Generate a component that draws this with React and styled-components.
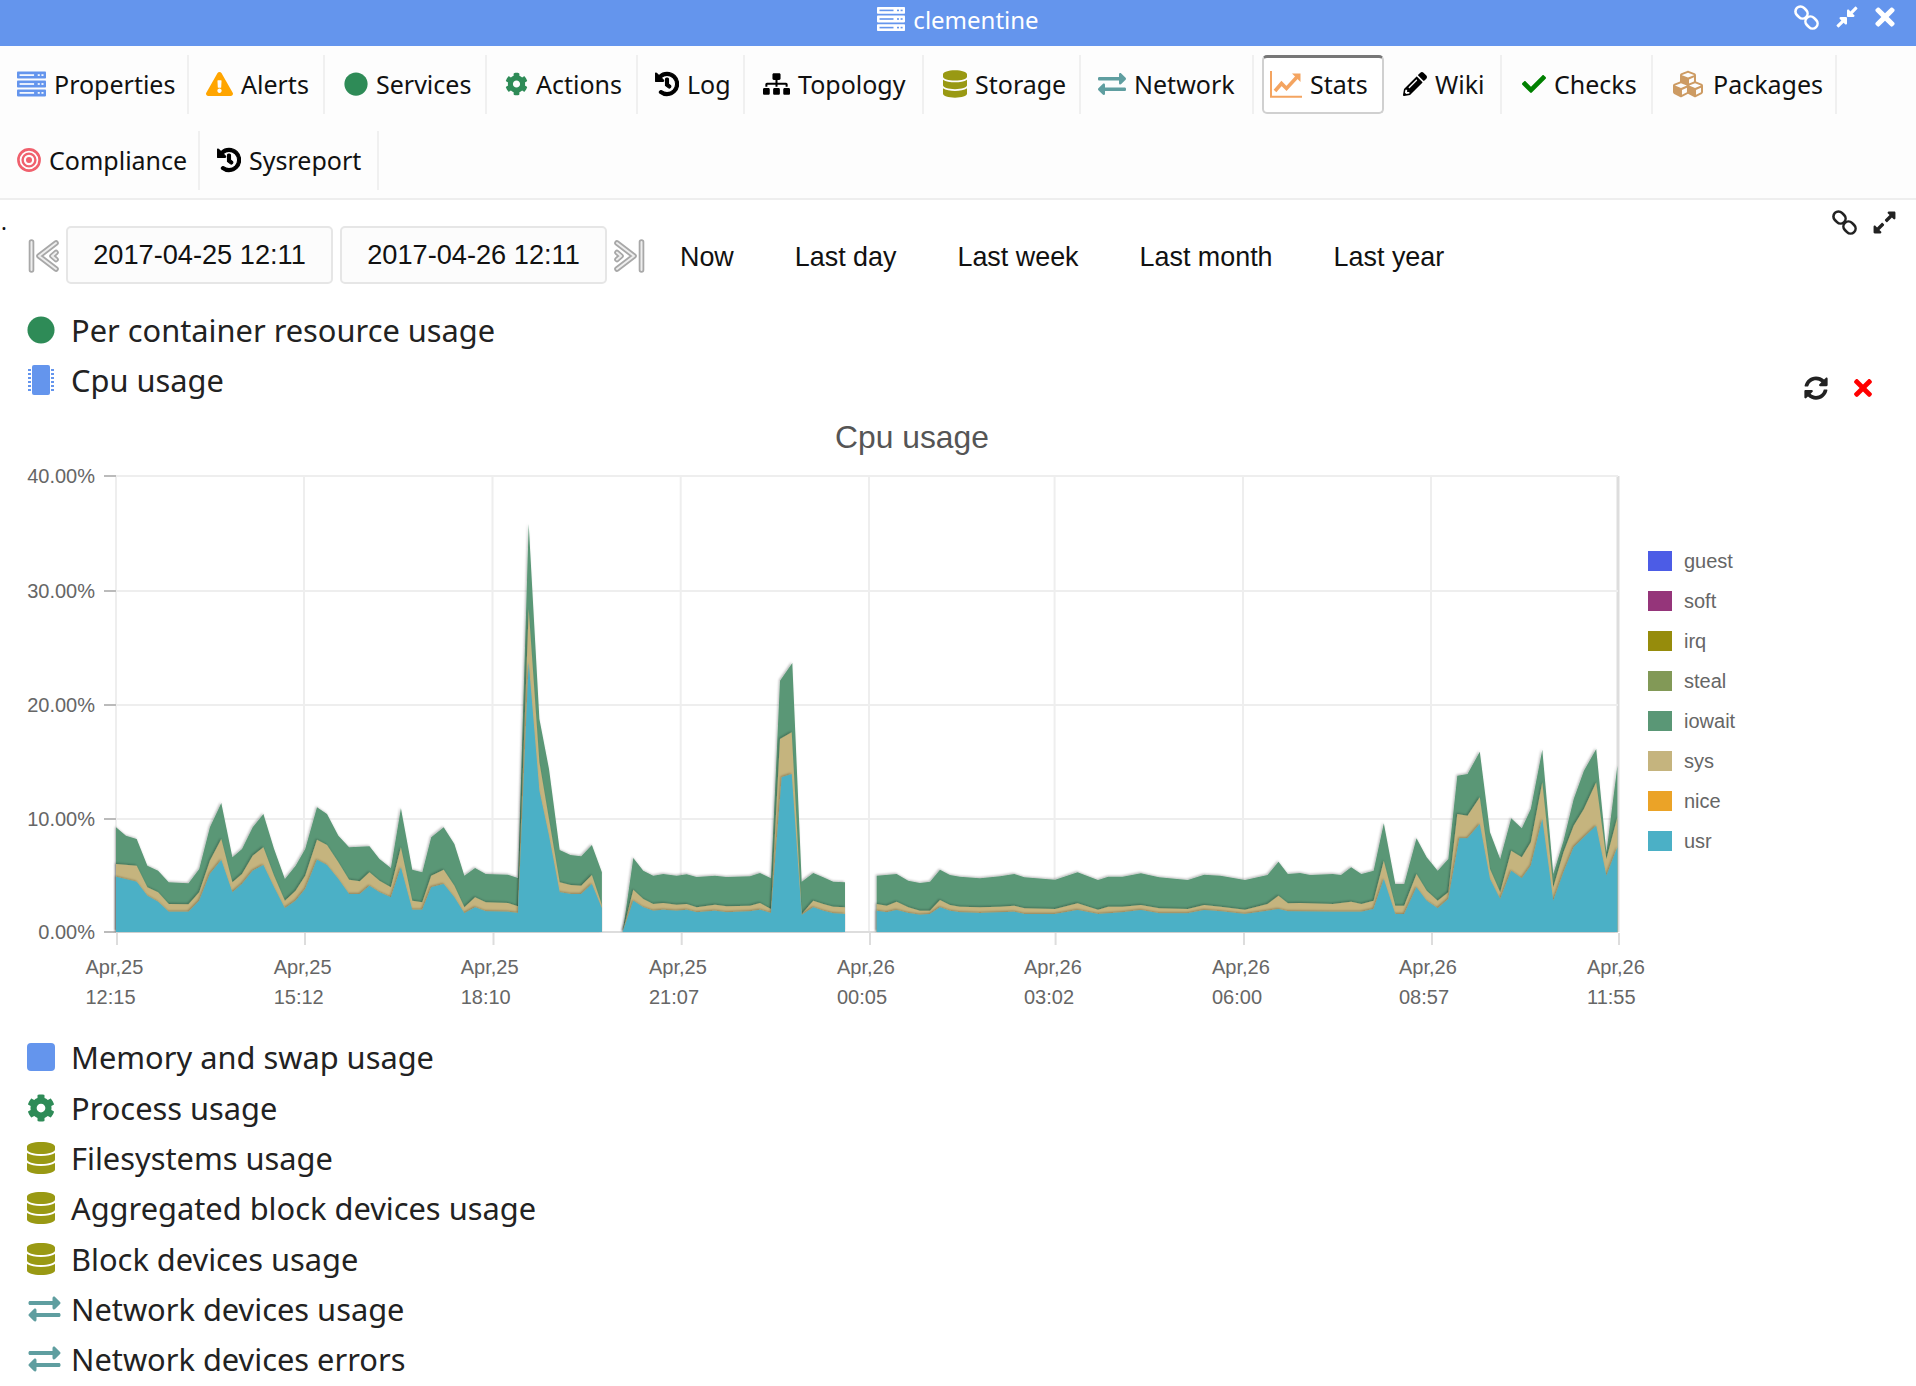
import React from "react";
import styled, { createGlobalStyle } from "styled-components";
import {
  FaCircle,
  FaCog,
  FaCheck,
  FaCompressAlt,
  FaCubes,
  FaDatabase,
  FaExchangeAlt,
  FaExclamationTriangle,
  FaExpandAlt,
  FaHistory,
  FaPencilAlt,
  FaSitemap,
  FaSyncAlt,
  FaTimes,
} from "react-icons/fa";

const GlobalStyle = createGlobalStyle`
  html, body {
    margin: 0;
    padding: 0;
    background: #fff;
    overflow: hidden;
  }
  body {
    font-family: "Noto Sans", sans-serif;
  }
`;

const TitleBar = styled.div`
  position: relative;
  height: 46px;
  padding-bottom: 8px;
  box-sizing: border-box;
  background: #6495ed;
  color: #fff;
  font-size: 24px;
  display: flex;
  justify-content: center;
  align-items: center;
  gap: 8px;
`;
const TitleActions = styled.div`
  position: absolute;
  top: 3px;
  right: 17px;
  display: flex;
  align-items: center;
  gap: 16px;
  svg:last-child {
    margin-left: -4px;
  }
`;
const TabBar = styled.div`
  display: flex;
  flex-wrap: wrap;
  row-gap: 17px;
  padding: 9px 0 8px;
  background: #fdfdfd;
  border-bottom: 2px solid #eee;
`;
const Tab = styled.div`
  width: ${(p) => p.$width}px;
  height: 59px;
  box-sizing: border-box;
  padding: 0 0 2px ${(p) => p.$pad || 17}px;
  display: flex;
  align-items: center;
  gap: 8px;
  color: #111;
  font-size: 25px;
  white-space: nowrap;
  border-right: 2px solid #f0f0f0;
  ${(p) =>
    p.$active &&
    `
    margin-left: 8px;
    padding-left: 6px;
    background: #fff;
    border: 2px solid #d0d0d0;
    border-top: 3px solid #777;
    border-radius: 5px;
  `}
`;
const IconBox = styled.span`
  flex: none;
  display: inline-flex;
  align-items: center;
  justify-content: center;
  width: ${(p) => p.$w}px;
  color: ${(p) => p.$color};
  svg {
    width: ${(p) => p.$w}px;
    height: ${(p) => p.$h || 30}px;
    display: block;
  }
`;
const Controls = styled.div`
  display: flex;
  height: 104.5px;
  box-sizing: border-box;
  padding: 26px 19px 0 0;
  font-family: "Liberation Sans", sans-serif;
  font-size: 27.2px;
  color: #111;
`;
const Dot = styled.span`
  width: 28px;
  font-family: "Noto Sans", sans-serif;
  font-size: 22px;
  line-height: 22px;
  padding-left: 1px;
  box-sizing: border-box;
  margin-top: -16px;
`;
const DateBox = styled.div`
  width: 267px;
  height: 58px;
  box-sizing: border-box;
  margin-right: 7px;
  display: flex;
  align-items: center;
  justify-content: center;
  background: #fcfcfc;
  border: 2px solid #e6e6e6;
  border-radius: 5px;
`;
const StepButton = styled.span`
  flex: none;
  width: 31px;
  height: 58px;
  margin-right: ${(p) => p.$mr}px;
  display: flex;
  align-items: center;
`;
const RangeLink = styled.span`
  height: 58px;
  box-sizing: border-box;
  padding: 4px 30.5px 0;
  display: flex;
  align-items: center;
  font-size: 26.9px;
`;
const CornerActions = styled.div`
  margin-left: auto;
  margin-top: -16px;
  height: 26px;
  display: flex;
  gap: 15px;
  color: #222;
`;
const Row = styled.div`
  height: 50.33px;
  padding: 0 40px 0 27px;
  display: flex;
  align-items: center;
  font-size: 30.8px;
  color: #222;
`;
const RowIcon = styled.span`
  flex: none;
  width: 44px;
  display: flex;
  align-items: center;
  color: ${(p) => p.$color};
  svg {
    width: ${(p) => p.$w || 28}px;
    height: ${(p) => p.$h || 32}px;
    display: block;
  }
`;
const RowActions = styled.div`
  margin-left: auto;
  margin-top: 16px;
  display: flex;
  align-items: center;
  gap: 22px;
  color: #222;
  svg {
    display: block;
  }
`;
const Chart = styled.svg`
  display: block;
  width: 1916px;
  height: 627px;
  font-family: "Liberation Sans", sans-serif;
`;

const ServerIcon = ({ cut }) => (
  <svg viewBox="0 0 28 24">
    {[0, 8.6, 17.2].map((y) => (
      <g key={y}>
        <rect y={y} width="28" height="6.8" rx="0.8" fill="currentColor" />
        <rect x="2.5" y={y + 2.6} width="14" height="1.6" fill={cut} />
        <rect x="20" y={y + 2.6} width="2" height="1.6" fill={cut} />
        <rect x="23.6" y={y + 2.6} width="2" height="1.6" fill={cut} />
      </g>
    ))}
  </svg>
);

const ChainIcon = ({ size = 25 }) => (
  <svg width={size} height={size} viewBox="0 0 25 25" fill="none" stroke="currentColor" strokeWidth="2.6">
    <rect x="1" y="2.5" width="13" height="10" rx="5" transform="rotate(45 7.5 7.5)" />
    <rect x="11" y="12.5" width="13" height="10" rx="5" transform="rotate(45 17.5 17.5)" />
  </svg>
);

const BullseyeIcon = () => (
  <svg viewBox="0 0 24 24">
    <circle cx="12" cy="12" r="10.6" fill="none" stroke="currentColor" strokeWidth="2.6" />
    <circle cx="12" cy="12" r="6.4" fill="none" stroke="currentColor" strokeWidth="2.4" />
    <circle cx="12" cy="12" r="3" fill="currentColor" />
  </svg>
);

const LineChartIcon = () => (
  <svg viewBox="0 0 32 28" fill="none" stroke="currentColor">
    <path d="M1 1V26.8H32" strokeWidth="2" />
    <path d="M5 21L11.5 13.5L16.5 18.5L27 7" strokeWidth="3.6" />
    <path d="M22 3.5H30.5V12Z" fill="currentColor" stroke="none" />
  </svg>
);

const CpuIcon = () => (
  <svg viewBox="0 0 28 32">
    <rect x="5" y="1" width="18" height="30" rx="2" fill="currentColor" />
    {[5, 9, 13, 17, 21, 25].map((y) => (
      <g key={y}>
        <rect x="1" y={y} width="3" height="2" fill="currentColor" />
        <rect x="24" y={y} width="3" height="2" fill="currentColor" />
      </g>
    ))}
  </svg>
);

const MemoryIcon = () => (
  <svg viewBox="0 0 28 32">
    <rect y="2" width="28" height="28" rx="4" fill="currentColor" />
  </svg>
);

const StepIcon = ({ flip }) => (
  <svg width="31" height="36" viewBox="0 0 31 36" style={flip ? { transform: "scaleX(-1)" } : undefined}>
    {["#a8a8a8", "#eee"].map((stroke, i) => (
      <g key={stroke} fill="none" stroke={stroke} strokeWidth={i ? 2 : 5.6} strokeLinecap="round" strokeLinejoin="round">
        <path d="M3.5 5V33" />
        <path d="M28 6L11 19L28 32" />
        <path d="M28 15.5L24 19L28 22.5" />
      </g>
    ))}
  </svg>
);

const tabRows = [
  { label: "Properties", icon: <ServerIcon cut="#fff" />, color: "#6495ed", w: 29, width: 189 },
  { label: "Alerts", icon: <FaExclamationTriangle />, color: "#ffa500", w: 27, width: 136 },
  { label: "Services", icon: <FaCircle />, color: "#2e8b57", w: 24, width: 162, pad: 19 },
  { label: "Actions", icon: <FaCog />, color: "#2e8b57", w: 23, width: 151, pad: 18 },
  { label: "Log", icon: <FaHistory strokeWidth={24} />, color: "#000", w: 24, width: 107 },
  { label: "Topology", icon: <FaSitemap />, color: "#000", w: 27, width: 179, pad: 18 },
  { label: "Storage", icon: <FaDatabase />, color: "#999913", w: 24, width: 157, pad: 19 },
  { label: "Network", icon: <FaExchangeAlt />, color: "#5f9ea0", w: 28, width: 173 },
  { label: "Stats", icon: <LineChartIcon />, color: "#f4a460", w: 32, width: 122, active: true },
  { label: "Wiki", icon: <FaPencilAlt />, color: "#000", w: 24, width: 118, pad: 19 },
  { label: "Checks", icon: <FaCheck />, color: "#008000", w: 24, width: 151, pad: 20 },
  { label: "Packages", icon: <FaCubes />, color: "#cd9b63", w: 34, width: 184, pad: 18 },
  { label: "Compliance", icon: <BullseyeIcon />, color: "#f0606d", w: 24, width: 200 },
  { label: "Sysreport", icon: <FaHistory strokeWidth={24} />, color: "#000", w: 24, width: 179 },
];

const ranges = ["Now", "Last day", "Last week", "Last month", "Last year"];

const afterChart = [
  { label: "Memory and swap usage", icon: <MemoryIcon />, color: "#6495ed" },
  { label: "Process usage", icon: <FaCog />, color: "#2e8b57" },
  { label: "Filesystems usage", icon: <FaDatabase />, color: "#999913" },
  { label: "Aggregated block devices usage", icon: <FaDatabase />, color: "#999913" },
  { label: "Block devices usage", icon: <FaDatabase />, color: "#999913" },
  { label: "Network devices usage", icon: <FaExchangeAlt />, color: "#5f9ea0", w: 35 },
  { label: "Network devices errors", icon: <FaExchangeAlt />, color: "#5f9ea0", w: 35 },
];

// chart traces, read off the reference as flat x,y lists, one scale per stretch of the graph
const scaleA = (x, y) => [101 + x * 0.357, 500 + y / 3];
const scaleB = (x, y) => [600 + x / 3, 640 + y / 3];
const scaleC = (x, y) => [1000 + x / 2.449, 720 + y / 3];

const traceA = {
  iowait: [42,985,70,1010,100,1020,130,1100,160,1115,190,1150,245,1153,275,1110,305,985,337,912,368,1075,395,1050,425,985,455,945,485,1050,515,1140,545,1100,572,1050,605,925,633,945,665,1010,695,1045,752,1042,780,1080,812,1107,840,928,872,1112,900,1120,925,1015,960,985,990,1035,1018,1130,1048,1107,1078,1125,1140,1127,1168,1137,1198,75,1228,660,1255,810,1285,1053,1315,1068,1345,1072,1375,1038,1403,1120],
  sys: [42,1095,100,1100,130,1165,160,1180,190,1215,245,1216,275,1180,305,1085,337,1020,368,1150,395,1125,425,1070,455,1045,485,1130,515,1205,545,1175,572,1130,605,1022,633,1038,665,1090,695,1142,725,1147,752,1120,780,1145,812,1165,840,1045,872,1205,900,1210,925,1130,960,1112,990,1160,1018,1225,1048,1195,1078,1210,1140,1212,1168,1222,1198,330,1228,790,1255,960,1285,1150,1315,1158,1345,1160,1375,1128,1403,1218],
  usr: [42,1133,100,1148,130,1190,160,1208,190,1238,245,1238,275,1205,305,1125,337,1083,368,1180,395,1155,425,1115,455,1098,485,1165,515,1228,545,1205,572,1170,605,1082,633,1098,665,1140,695,1185,725,1185,752,1160,780,1180,812,1195,840,1105,872,1232,900,1232,925,1165,960,1155,990,1195,1018,1243,1048,1225,1078,1237,1140,1238,1168,1242,1198,490,1228,875,1255,1010,1285,1180,1315,1185,1345,1185,1375,1155,1403,1228],
};
const traceB = {
  iowait: [100,657,130,695,160,710,190,705,230,710,260,706,290,714,345,710,380,714,450,712,480,702,513,718,540,125,577,72,605,728,640,702,670,715,700,728,735,730],
  sys: [100,752,130,780,160,795,190,792,230,797,260,795,290,805,345,797,380,802,450,800,480,792,513,810,540,300,575,280,605,825,640,785,670,795,700,803,735,805],
  usr: [100,785,130,805,160,815,190,812,230,815,260,812,290,820,345,815,380,820,450,817,480,812,513,822,545,415,575,405,605,828,640,805,670,815,700,823,735,825],
};
const traceB2 = {
  iowait: [830,710,890,705,925,725,960,732,990,728,1020,692,1050,708,1080,713,1140,718,1200,712],
  sys: [830,795,860,800,890,788,925,805,960,815,990,815,1020,783,1050,798,1080,803,1140,805,1200,803],
  usr: [830,815,860,820,890,813,925,822,960,827,990,825,1020,805,1050,815,1080,820,1140,822,1200,820],
};
const traceC = {
  iowait: [35,465,60,475,135,482,190,460,240,483,265,473,300,473,345,463,390,475,460,483,500,467,540,470,600,483,655,468,682,428,705,465,735,462,760,468,815,465,835,468,860,445,885,465,915,455,940,313,968,495,990,495,1020,358,1045,415,1072,455,1098,420,1120,170,1145,165,1175,98,1200,340,1225,420,1252,298,1278,328,1300,270,1328,92,1355,465,1380,365,1405,240,1430,155,1460,90,1485,400,1512,140],
  sys: [35,560,60,568,135,570,190,553,240,572,265,563,300,563,345,558,390,568,460,570,500,558,540,563,600,572,655,555,682,530,705,553,735,552,815,555,860,548,885,555,915,545,940,425,968,560,990,560,1020,465,1045,515,1072,545,1098,520,1120,285,1145,290,1175,235,1200,450,1225,520,1252,395,1278,415,1300,370,1328,190,1355,505,1380,400,1405,320,1430,270,1460,190,1485,420,1512,295],
  usr: [35,578,60,585,135,585,190,573,240,585,300,580,345,573,390,583,460,583,500,573,540,577,600,585,655,575,682,570,705,577,815,578,885,578,915,570,940,480,968,585,990,585,1020,505,1045,545,1072,568,1098,540,1125,358,1145,358,1175,315,1200,480,1225,540,1252,455,1278,478,1300,440,1328,300,1355,545,1380,460,1405,385,1430,355,1460,320,1485,470,1512,385],
};

const BASE = 933;

const toPoints = (flat, scale) => {
  const pts = [];
  for (let i = 0; i < flat.length; i += 2) pts.push(scale(flat[i], flat[i + 1]));
  return pts;
};

const layerPath = (key) => {
  const stretches = [
    toPoints(traceA[key], scaleA),
    [[622.7, BASE], ...toPoints(traceB[key], scaleB)],
    [...toPoints(traceB2[key], scaleB), ...toPoints(traceC[key], scaleC)],
  ];
  return stretches
    .map((pts) => {
      const line = pts.map(([x, y]) => `${x.toFixed(1)} ${y.toFixed(1)}`).join("L");
      return `M${pts[0][0].toFixed(1)} ${BASE}L${line}L${pts[pts.length - 1][0].toFixed(1)} ${BASE}Z`;
    })
    .join("");
};

const layers = [
  { key: "iowait", color: "#5a9776" },
  { key: "sys", color: "#c5b47e" },
  { key: "usr", color: "#4bb0c6" },
];

const legend = [
  ["guest", "#4c5ce6"],
  ["soft", "#95357a"],
  ["irq", "#968c0c"],
  ["steal", "#829957"],
  ["iowait", "#5a9776"],
  ["sys", "#c5b47e"],
  ["nice", "#eba327"],
  ["usr", "#4bb0c6"],
];

const gridX = [116, 304, 492.5, 680.7, 869, 1054.6, 1243, 1431, 1618];
const gridY = [
  ["40.00%", 477],
  ["30.00%", 592],
  ["20.00%", 706],
  ["10.00%", 820],
  ["0.00%", 933],
];
const xLabels = [
  ["Apr,25", "12:15", 85.5],
  ["Apr,25", "15:12", 273.7],
  ["Apr,25", "18:10", 460.7],
  ["Apr,25", "21:07", 649],
  ["Apr,26", "00:05", 837],
  ["Apr,26", "03:02", 1024],
  ["Apr,26", "06:00", 1212],
  ["Apr,26", "08:57", 1399],
  ["Apr,26", "11:55", 1587],
];

const CpuChart = () => (
  <Chart viewBox="0 406 1916 627">
    <defs>
      <filter id="areaShadow" x="-5%" y="-5%" width="110%" height="110%">
        <feGaussianBlur in="SourceGraphic" stdDeviation="0.4" result="soft" />
        <feDropShadow in="soft" dx="-1" dy="-1" stdDeviation="1" floodColor="#000" floodOpacity="0.28" />
      </filter>
    </defs>
    <text x="912" y="449" textAnchor="middle" fontSize="31.8" fill="#555">
      Cpu usage
    </text>
    {gridX.map((x) => (
      <g key={x}>
        <line x1={x} x2={x} y1="477" y2="933" stroke={x === 1618 ? "#ddd" : "#eee"} strokeWidth={x === 1618 ? 3 : 2} />
        <line x1={x + 1} x2={x + 1} y1="934" y2="946" stroke="#ddd" strokeWidth="2" />
      </g>
    ))}
    {gridY.map(([label, y]) => (
      <g key={label}>
        <line x1="116" x2="1618" y1={y} y2={y} stroke={y === 933 ? "#ddd" : "#eee"} strokeWidth="2" />
        <line x1="104" x2="116" y1={y} y2={y} stroke="#bbb" strokeWidth="2" />
        <text x="95" y={y + 7} textAnchor="end" fontSize="20" fill="#666">
          {label}
        </text>
      </g>
    ))}
    {xLabels.map(([day, time, x]) => (
      <text key={time} fontSize="20" fill="#666">
        <tspan x={x} y="975">
          {day}
        </tspan>
        <tspan x={x} y="1005">
          {time}
        </tspan>
      </text>
    ))}
    {layers.map(({ key, color }) => (
      <path key={key} d={layerPath(key)} fill={color} filter="url(#areaShadow)" />
    ))}
    {legend.map(([name, color], i) => (
      <g key={name}>
        <rect x="1648" y={552 + i * 40} width="24" height="20" fill={color} />
        <text x="1684" y={569 + i * 40} fontSize="20" fill="#666">
          {name}
        </text>
      </g>
    ))}
  </Chart>
);

const App = () => (
  <>
    <GlobalStyle />
    <TitleBar>
      <IconBox $w={28} $h={24} $color="#fff">
        <ServerIcon cut="#6495ed" />
      </IconBox>
      clementine
      <TitleActions>
        <ChainIcon />
        <FaCompressAlt size={24} />
        <FaTimes size={28} />
      </TitleActions>
    </TitleBar>
    <TabBar>
      {tabRows.map((tab) => (
        <Tab key={tab.label} $active={tab.active} $width={tab.width} $pad={tab.pad}>
          <IconBox $w={tab.w} $color={tab.color}>
            {tab.icon}
          </IconBox>
          {tab.label}
        </Tab>
      ))}
    </TabBar>
    <Controls>
      <Dot>.</Dot>
      <StepButton $mr={7}>
        <StepIcon />
      </StepButton>
      <DateBox>2017-04-25 12:11</DateBox>
      <DateBox>2017-04-26 12:11</DateBox>
      <StepButton $mr={4.5}>
        <StepIcon flip />
      </StepButton>
      {ranges.map((range) => (
        <RangeLink key={range}>{range}</RangeLink>
      ))}
      <CornerActions>
        <ChainIcon />
        <FaExpandAlt size={25} />
      </CornerActions>
    </Controls>
    <Row>
      <RowIcon $color="#2e8b57">
        <FaCircle />
      </RowIcon>
      Per container resource usage
    </Row>
    <Row>
      <RowIcon $color="#6495ed">
        <CpuIcon />
      </RowIcon>
      Cpu usage
      <RowActions>
        <FaSyncAlt size={24} />
        <FaTimes size={26} color="#f00" />
      </RowActions>
    </Row>
    <CpuChart />
    {afterChart.map((row) => (
      <Row key={row.label}>
        <RowIcon $color={row.color} $w={row.w}>
          {row.icon}
        </RowIcon>
        {row.label}
      </Row>
    ))}
  </>
);

export default App;
